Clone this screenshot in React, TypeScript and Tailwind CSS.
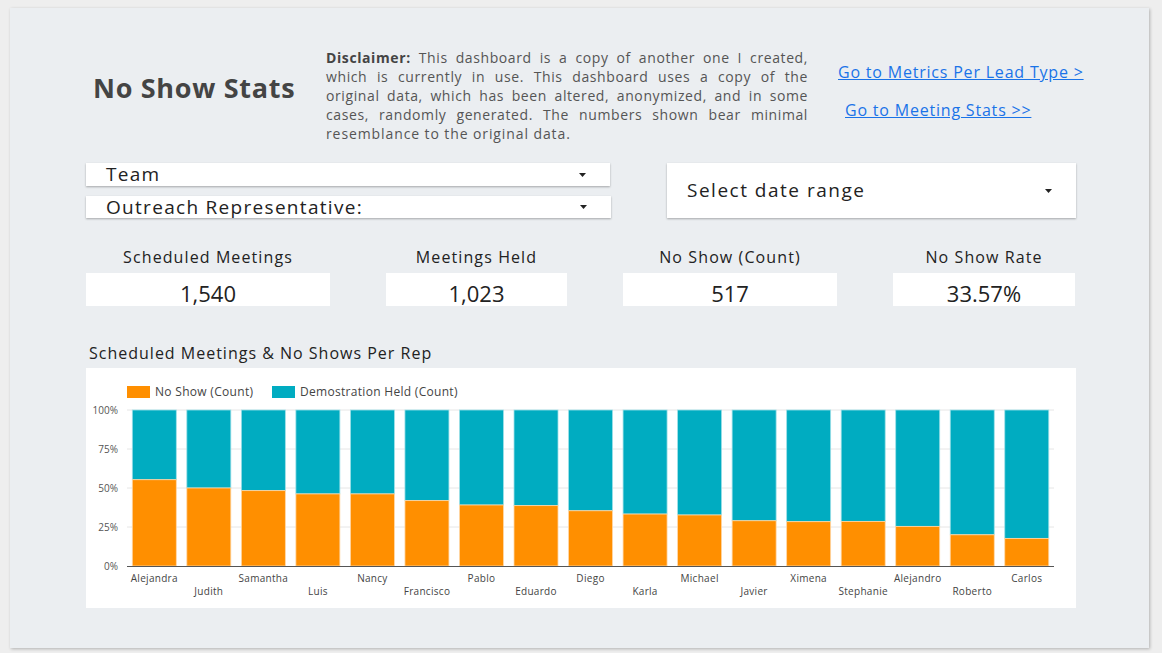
import React from 'react';

const reps: { name: string; noShow: number }[] = [
  { name: 'Alejandra', noShow: 55.3 },
  { name: 'Judith', noShow: 50 },
  { name: 'Samantha', noShow: 48.3 },
  { name: 'Luis', noShow: 46.2 },
  { name: 'Nancy', noShow: 46.2 },
  { name: 'Francisco', noShow: 41.9 },
  { name: 'Pablo', noShow: 39.1 },
  { name: 'Eduardo', noShow: 38.7 },
  { name: 'Diego', noShow: 35.4 },
  { name: 'Karla', noShow: 33.3 },
  { name: 'Michael', noShow: 32.7 },
  { name: 'Javier', noShow: 29 },
  { name: 'Ximena', noShow: 28.4 },
  { name: 'Stephanie', noShow: 28.6 },
  { name: 'Alejandro', noShow: 25.4 },
  { name: 'Roberto', noShow: 20 },
  { name: 'Carlos', noShow: 17.7 },
];

const stats = [
  { label: 'Scheduled Meetings', value: '1,540', w: 'w-[244px]' },
  { label: 'Meetings Held', value: '1,023', w: 'w-[181px]' },
  { label: 'No Show (Count)', value: '517', w: 'w-[214px]' },
  { label: 'No Show Rate', value: '33.57%', w: 'w-[182px]' },
];

const disclaimer = [
  'This dashboard is a copy of another one I created,',
  'which is currently in use. This dashboard uses a copy of the',
  'original data, which has been altered, anonymized, and in some',
  'cases, randomly generated. The numbers shown bear minimal',
];

const Caret = () => (
  <svg width="7" height="4" viewBox="0 0 7 4" className="shrink-0">
    <path d="M0 0 L7 0 L3.5 4 Z" fill="#222" />
  </svg>
);

const Chart = () => {
  const left = 41;
  const right = 968;
  const top = 42;
  const bottom = 198;
  const band = (right - left) / reps.length;
  const barW = 44;
  const h = bottom - top;

  return (
    <svg width="990" height="240" viewBox="0 0 990 240" className="block">
      <g fontFamily="'Open Sans', sans-serif" fill="#444" letterSpacing="0.3">
        <rect x="41" y="18" width="23" height="12" fill="#ff8f00" />
        <text x="69" y="28" fontSize="12">No Show (Count)</text>
        <rect x="186" y="18" width="23" height="12" fill="#00acc1" />
        <text x="214" y="28" fontSize="12">Demostration Held (Count)</text>
      </g>
      {[0, 25, 50, 75, 100].map((t) => {
        const y = bottom - (t / 100) * h;
        return (
          <g key={t}>
            {t > 0 && <line x1={left} x2={right} y1={y} y2={y} stroke="#e6e6e6" strokeWidth="1" />}
            <text x="32" y={y + 3.5} fontSize="10" textAnchor="end" fill="#555" fontFamily="'Open Sans', sans-serif">
              {t}%
            </text>
          </g>
        );
      })}
      {reps.map((r, i) => {
        const x = left + i * band + 5.3;
        const oh = (r.noShow / 100) * h;
        return (
          <g key={r.name + i}>
            <rect x={x} y={top} width={barW} height={h - oh} fill="#00acc1" stroke="#9fe0e8" strokeWidth="0.8" />
            <rect x={x} y={bottom - oh} width={barW} height={oh} fill="#ff8f00" stroke="#ffd8a8" strokeWidth="0.8" />
            <text
              x={x + barW / 2}
              y={i % 2 === 0 ? 213.5 : 226.5}
              fontSize="10"
              textAnchor="middle"
              fill="#444"
              letterSpacing="0.3"
              fontFamily="'Open Sans', sans-serif"
            >
              {r.name}
            </text>
          </g>
        );
      })}
      <line x1={left} x2={right} y1={bottom + 0.5} y2={bottom + 0.5} stroke="#555" strokeWidth="1" />
    </svg>
  );
};

export default function App() {
  return (
    <div className="w-[1162px] h-[653px] bg-[#eeeeee] pt-[8px] pl-[10px] font-['Open_Sans',sans-serif]">
      <div className="w-[1139px] h-[640px] bg-[#ebeef1] shadow-[1px_1px_3px_rgba(0,0,0,0.25)]">
        {/* header */}
        <div className="h-[155px] pt-[40px] flex">
          <div className="ml-[83px] w-[233px] mt-[24px]">
            <h1 className="text-[27px] leading-[32px] font-bold tracking-[0.7px] text-[#444] whitespace-nowrap">No Show Stats</h1>
          </div>
          <div className="w-[482px] text-[14px] leading-[19px] tracking-[0.9px] text-[#555]">
            {disclaimer.map((line, i) => (
              <div key={i} className="text-justify whitespace-nowrap [text-align-last:justify] tracking-[0.6px]">
                {i === 0 && <b className="text-[#444]">Disclaimer: </b>}
                {line}
              </div>
            ))}
            <div>resemblance to the original data.</div>
          </div>
          <div className="ml-[30px] mt-[14px] flex flex-col text-[16px] leading-[20px] tracking-[0.8px] text-[#1a73e8] whitespace-nowrap">
            <a href="#" className="underline">Go to Metrics Per Lead Type &gt;</a>
            <a href="#" className="underline mt-[18px] ml-[7px]">Go to Meeting Stats &gt;&gt;</a>
          </div>
        </div>

        {/* filters */}
        <div className="flex ml-[76px] text-[19px] tracking-[1.3px] text-[#222]">
          <div className="flex flex-col gap-[10px]">
            <div className="w-[524px] h-[23px] bg-white shadow-[0_1px_2px_rgba(0,0,0,0.3)] flex items-center justify-between pl-[20px] pr-[24px]">
              <span>Team</span>
              <Caret />
            </div>
            <div className="w-[525px] h-[22px] bg-white shadow-[0_1px_2px_rgba(0,0,0,0.3)] flex items-center justify-between pl-[20px] pr-[24px]">
              <span>Outreach Representative:</span>
              <Caret />
            </div>
          </div>
          <div className="ml-[56px] w-[409px] h-[55px] bg-white shadow-[0_1px_2px_rgba(0,0,0,0.3)] flex items-center justify-between pl-[20px] pr-[24px] tracking-[1.5px]">
            <span>Select date range</span>
            <Caret />
          </div>
        </div>

        {/* scorecards */}
        <div className="flex gap-[56px] ml-[76px] mt-[29px]">
          {stats.map((s) => (
            <div key={s.label} className={`${s.w} flex flex-col items-center`}>
              <div className="text-[16px] leading-[20px] tracking-[1.1px] text-[#222] whitespace-nowrap">{s.label}</div>
              <div className="mt-[6px] w-full h-[33px] bg-white flex items-center justify-center pt-[7px] text-[22px] text-[#222]">
                {s.value}
              </div>
            </div>
          ))}
        </div>

        {/* chart */}
        <div className="ml-[79px] mt-[37px] text-[16px] leading-[20px] tracking-[1px] text-[#222] whitespace-nowrap">
          Scheduled Meetings &amp; No Shows Per Rep
        </div>
        <div className="ml-[76px] mt-[5px] w-[990px] h-[240px] bg-white">
          <Chart />
        </div>
      </div>
    </div>
  );
}
